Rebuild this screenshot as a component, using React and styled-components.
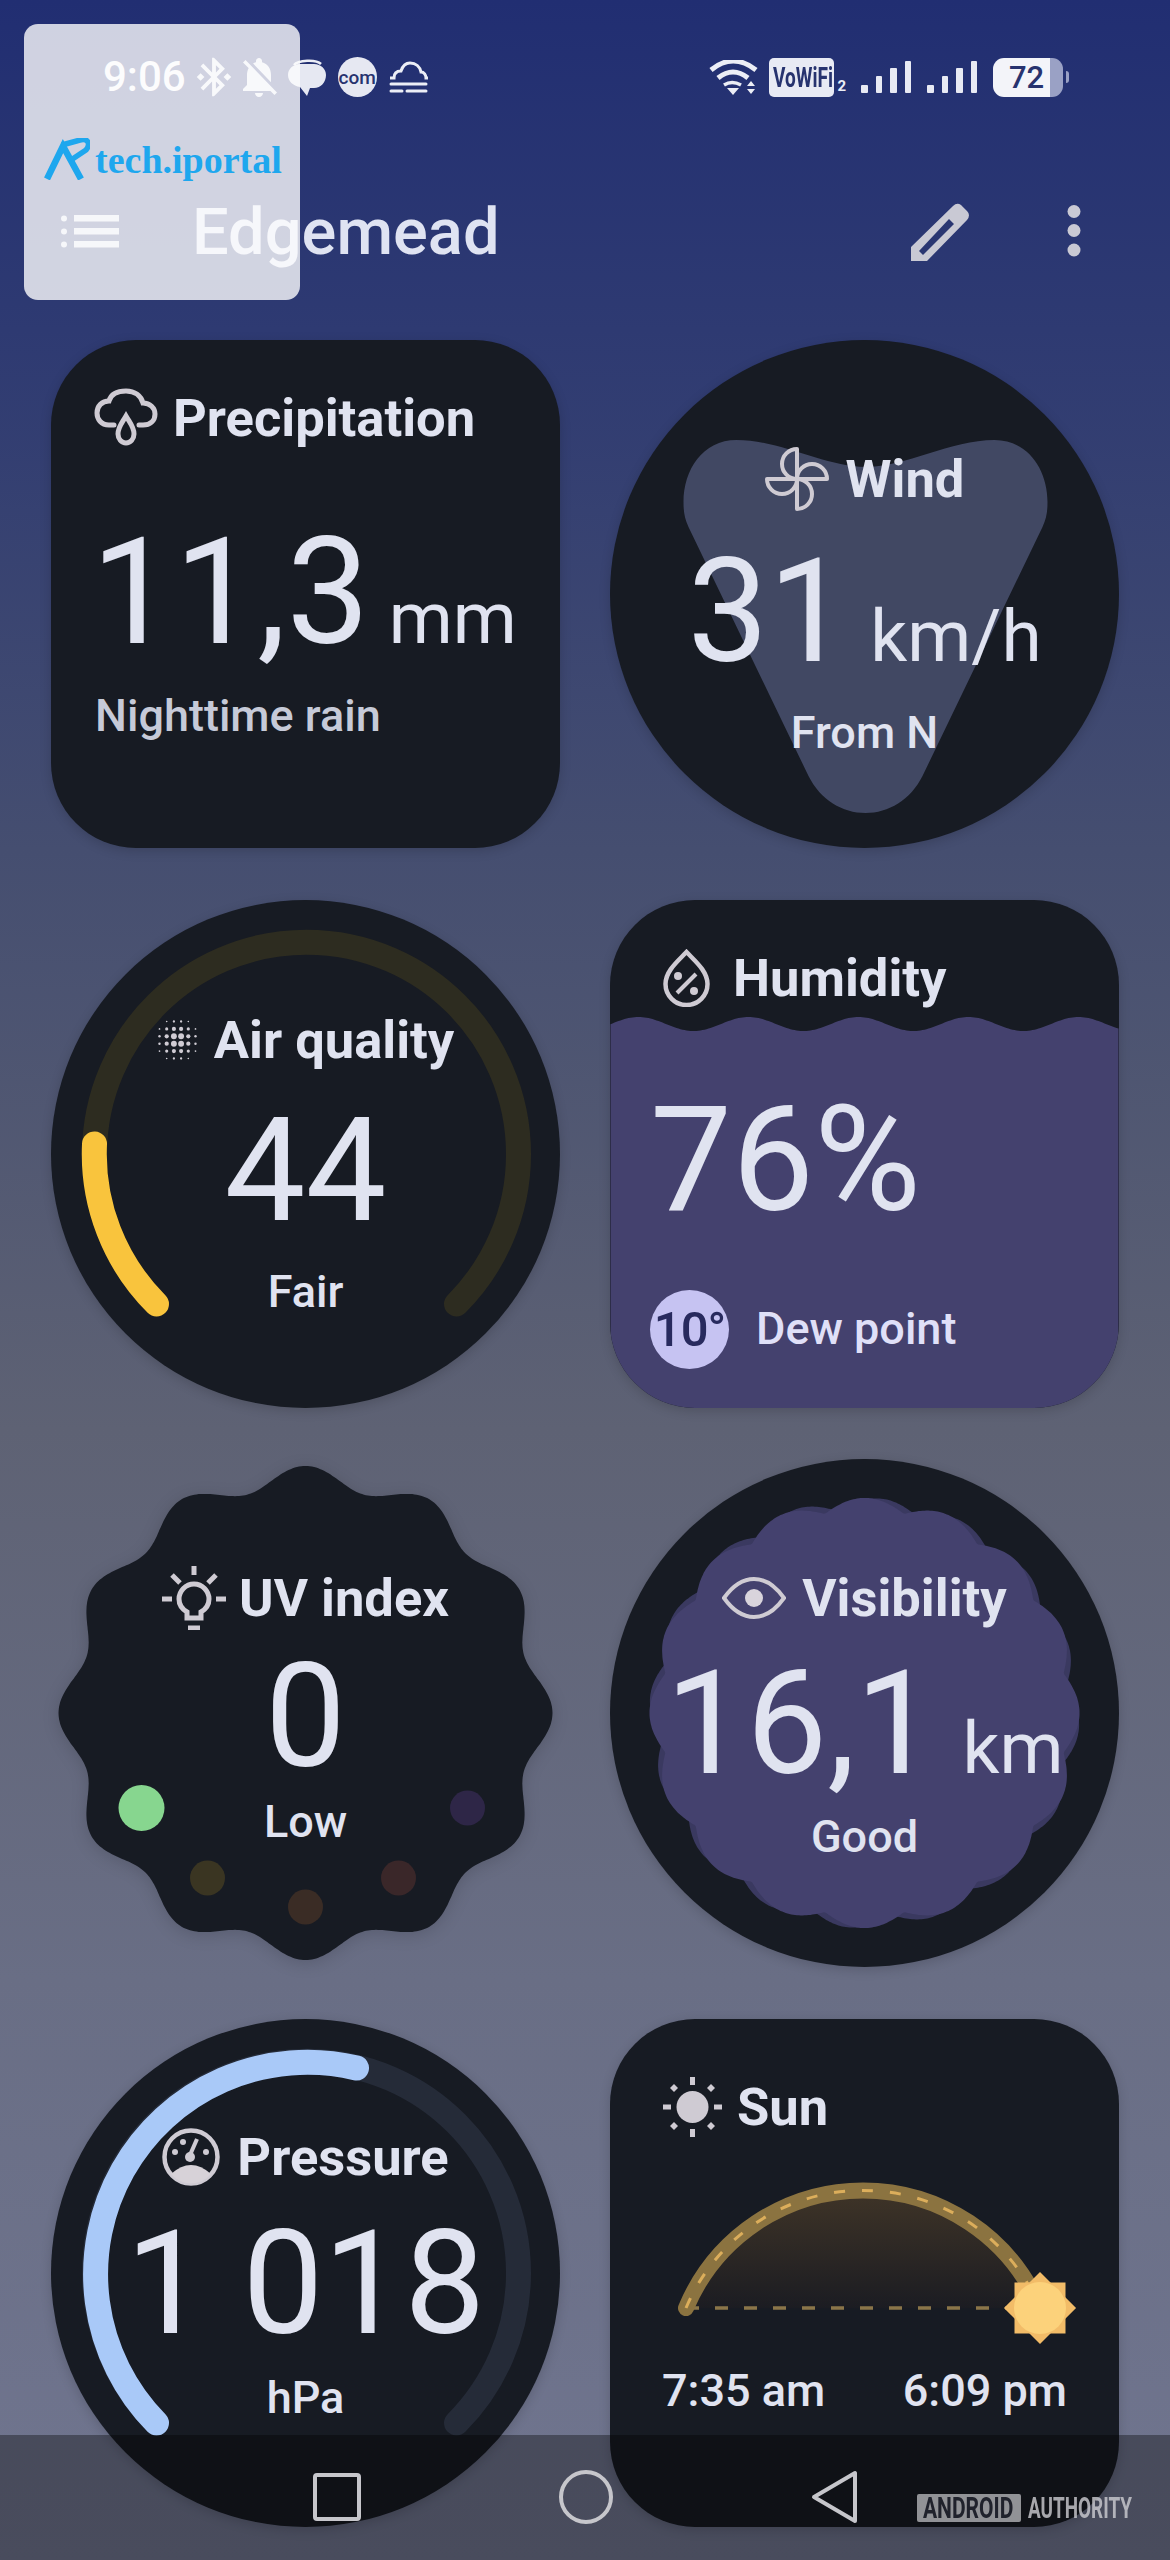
import React from "react";
import styled, { createGlobalStyle } from "styled-components";
import { MdBluetoothConnected, MdNotificationsOff } from "react-icons/md";

const INK = "#e0e3f0";
const ICON = "#cfcbd3";
const CARD = "#171b23";
const PURPLE = "#44416e";

// shapes that are worked out once, they are easier as functions than as hand written paths
const polar = (fn, steps = 720, cx = 254, cy = 254, turn = 0) => {
  let d = "";
  for (let i = 0; i < steps; i++) {
    const t = (i / steps) * Math.PI * 2;
    const r = fn(t);
    const a = t + turn;
    d += `${i ? "L" : "M"}${(cx + r * Math.sin(a)).toFixed(1)} ${(cy - r * Math.cos(a)).toFixed(1)} `;
  }
  return d + "Z";
};

const cookie = polar((t) => 236.5 + 10.5 * Math.cos(12 * t));
const scallop = polar((t) => 203 + 12 * Math.abs(Math.cos(8 * t)));
const scallopBack = polar((t) => 203 + 12 * Math.abs(Math.cos(8 * t)), 720, 254, 254, 0.07);

const wave = (() => {
  let d = "M0 508 L0 131 ";
  for (let x = 0; x <= 508; x += 2) {
    const y = 124 - 7 * Math.cos((2 * Math.PI * (x - 28)) / 110);
    d += `L${x} ${y.toFixed(1)} `;
  }
  return d + "L508 508 Z";
})();

const GlobalStyle = createGlobalStyle`
  html, body {
    margin: 0;
    padding: 0;
    background: #222f72;
  }
  * {
    box-sizing: border-box;
  }
`;

const Page = styled.div`
  position: relative;
  width: 1170px;
  height: 2560px;
  overflow: hidden;
  font-family: Roboto, "Liberation Sans", sans-serif;
  color: ${INK};
  background: linear-gradient(
    180deg,
    #212e72 0,
    #2e3a72 330px,
    #454e70 850px,
    #5e6274 1430px,
    #696e85 1980px,
    #70758f 2560px
  );
`;

const StatusBar = styled.div`
  display: flex;
  align-items: center;
  justify-content: space-between;
  height: 46px;
  margin-top: 54px;
  padding: 0 101px 0 103px;
  color: #eceef6;
`;

const StatusGroup = styled.div`
  display: flex;
  align-items: center;
  gap: ${(p) => p.$gap}px;
`;

const Clock = styled.span`
  font-size: 42px;
  font-weight: 500;
  line-height: 46px;
  color: #fff;
`;

const BluetoothGlyph = styled(MdBluetoothConnected)`
  flex: none;
  margin: 0 -7px;
`;

const BellGlyph = styled(MdNotificationsOff)`
  flex: none;
  margin: 0 -7px;
`;

const ComBadge = styled.span`
  display: flex;
  align-items: center;
  justify-content: center;
  width: 39px;
  height: 40px;
  border-radius: 50%;
  background: #e6e8f2;
  color: #27336f;
  font-size: 19px;
  font-weight: 500;
`;

const VoWifi = styled.span`
  display: block;
  width: 65px;
  height: 39px;
  border-radius: 5px;
  background: #e8eaf4;
  color: #27336f;
  font-size: 28px;
  font-weight: 700;
  line-height: 39px;
  padding-left: 4px;
  white-space: nowrap;
  span {
    display: inline-block;
    transform: scaleX(0.68);
    transform-origin: left center;
  }
`;

const SimSlot = styled.span`
  font-size: 15px;
  font-weight: 700;
  align-self: flex-end;
  margin: 0 4px 3px -8px;
  line-height: 15px;
`;

const Signal = styled.div`
  display: flex;
  align-items: flex-end;
  gap: 8px;
  height: 32px;
  margin-right: 5px;
`;

const SignalBar = styled.i`
  display: block;
  width: 6.5px;
  height: ${(p) => p.$h}px;
  background: #e8eaf4;
  border-radius: 1px;
`;

const Battery = styled.div`
  display: flex;
  align-items: center;
  gap: 3px;
`;

const BatteryBody = styled.div`
  width: 70px;
  height: 39px;
  border-radius: 11px;
  background: linear-gradient(90deg, #f3f4f9 81%, #9aa1c5 81%);
  color: #27336f;
  font-size: 31px;
  font-weight: 500;
  line-height: 39px;
  padding-left: 16px;
`;

const BatteryTip = styled.i`
  display: block;
  width: 3px;
  height: 12px;
  border-radius: 0 3px 3px 0;
  background: #9aa1c5;
`;

const Header = styled.header`
  display: flex;
  align-items: center;
  height: 100px;
  margin-top: 81px;
  padding: 0 89px 0 61px;
`;

const Title = styled.h1`
  margin: 2px 0 0 73px;
  font-size: 65px;
  font-weight: 500;
  line-height: 72px;
  color: #dfe3f2;
`;

const HeaderActions = styled.div`
  display: flex;
  align-items: center;
  gap: 98px;
  margin-left: auto;
`;

const Grid = styled.main`
  display: grid;
  grid-template-columns: 509px 509px;
  grid-auto-rows: 508px;
  column-gap: 50px;
  row-gap: 51.6px;
  margin-top: 59px;
  padding-left: 51px;
`;

const Card = styled.section`
  position: relative;
  isolation: isolate;
  display: flex;
  flex-direction: column;
  align-items: ${(p) => (p.$center ? "center" : "flex-start")};
  padding-top: ${(p) => p.$top}px;
  padding-left: ${(p) => p.$left || 0}px;
  border-radius: ${(p) => (p.$shape === "circle" ? "50%" : "85px")};
  background: ${(p) => (p.$shape === "cookie" ? "transparent" : CARD)};
  box-shadow: ${(p) => (p.$shape === "cookie" ? "none" : "0 3px 12px rgba(0, 0, 0, 0.16)")};
  overflow: ${(p) => (p.$shape === "cookie" ? "visible" : "hidden")};
`;

const Backdrop = styled.svg`
  position: absolute;
  inset: 0;
  width: 100%;
  height: 100%;
  z-index: -1;
  overflow: visible;
  filter: ${(p) => (p.$lifted ? "drop-shadow(0 3px 8px rgba(0, 0, 0, 0.15))" : "none")};
`;

const Heading = styled.h2`
  display: flex;
  align-items: center;
  gap: ${(p) => p.$gap}px;
  height: 60px;
  margin: 0 0 0 ${(p) => p.$indent || 0}px;
  font-size: 52.5px;
  font-weight: 700;
  line-height: 58px;
  white-space: nowrap;
  svg {
    flex: none;
  }
`;

const Reading = styled.div`
  display: flex;
  align-items: baseline;
  margin: ${(p) => p.$mt}px 0 0 ${(p) => p.$ml || 0}px;
  white-space: nowrap;
`;

const Value = styled.span`
  font-size: ${(p) => p.$size || 144}px;
  font-weight: 400;
  line-height: 150px;
`;

const Unit = styled.span`
  margin-left: ${(p) => p.$gap}px;
  font-size: 73px;
  font-weight: 400;
`;

const Caption = styled.p`
  margin: ${(p) => p.$mt}px 0 0 ${(p) => p.$ml || 0}px;
  font-size: 45px;
  font-weight: 500;
  line-height: 52px;
  color: ${(p) => p.$color || INK};
  white-space: nowrap;
`;

const DewRow = styled.div`
  display: flex;
  align-items: center;
  gap: 27px;
  margin-top: 54px;
`;

const DewBadge = styled.span`
  display: flex;
  align-items: center;
  justify-content: center;
  width: 79px;
  height: 79px;
  border-radius: 50%;
  background: #c6c3f2;
  color: #282a5e;
  font-size: 49px;
  font-weight: 500;
  letter-spacing: -1px;
`;

const SunChart = styled.svg`
  display: block;
  width: 508px;
  height: 228px;
`;

const TimeRow = styled.div`
  display: flex;
  justify-content: space-between;
  width: 100%;
  padding: 0 52px 0 52px;
  font-size: 45px;
  font-weight: 500;
  line-height: 52px;
`;

const NavBar = styled.nav`
  position: absolute;
  left: 0;
  right: 0;
  bottom: 0;
  display: flex;
  justify-content: center;
  align-items: center;
  gap: 198px;
  height: 125px;
  padding: 0 0 2px 0;
  background: rgba(0, 0, 0, 0.35);
`;

const NavSquare = styled.i`
  display: block;
  width: 48px;
  height: 48px;
  border: 4px solid #c6c6cb;
  border-radius: 4px;
`;

const NavCircle = styled.i`
  display: block;
  width: 54px;
  height: 54px;
  border: 4px solid #c6c6cb;
  border-radius: 50%;
`;

const Authority = styled.div`
  position: absolute;
  left: 917px;
  top: 59px;
  display: flex;
  align-items: center;
  gap: 7px;
  font-size: 30px;
  font-weight: 700;
  line-height: 28px;
  white-space: nowrap;
`;

const AuthorityBadge = styled.span`
  display: block;
  width: 104px;
  height: 28px;
  border-radius: 2px;
  background: rgba(190, 190, 194, 0.75);
  color: #20222c;
  padding-left: 6px;
  span {
    display: inline-block;
    transform: scaleX(0.7);
    transform-origin: left center;
  }
`;

const AuthorityWord = styled.span`
  display: block;
  width: 104px;
  color: rgba(205, 205, 210, 0.8);
  span {
    display: inline-block;
    transform: scaleX(0.63);
    transform-origin: left center;
  }
`;

const Watermark = styled.aside`
  position: absolute;
  left: 24px;
  top: 24px;
  width: 276px;
  height: 276px;
  display: flex;
  align-items: flex-start;
  gap: 5px;
  padding: 114px 0 0 20px;
  border-radius: 14px;
  background: rgba(251, 251, 252, 0.8);
`;

const LogoText = styled.span`
  font-family: "Liberation Serif", serif;
  font-size: 38px;
  font-weight: 700;
  line-height: 44px;
  color: #1ea7ee;
`;

const ChatIcon = () => (
  <svg width="38" height="37" viewBox="0 0 38 37">
    <path d="M6 6 C10 1 28 0 33 5" fill="none" stroke="#eceef6" strokeWidth="2.5" />
    <path d="M12 5 H26 C33 5 38 10 38 16 C38 23 33 29 26 29 H22 L19 37 L12 28 C5 27 0 22 0 16 C0 10 5 5 12 5Z" fill="#e6e8f2" />
  </svg>
);

const FogIcon = () => (
  <svg width="39" height="32" viewBox="0 0 39 32" fill="none" stroke="#eceef6" strokeWidth="3">
    <path d="M1 17 H5 C5 12 8 10 12 10 C14 4 18 2 21 2 C27 2 31 6 32 11 C35 11 37 14 37 17 H39" />
    <path d="M2 23 H37 M2 30 H13 M18 30 H37" strokeLinecap="round" />
  </svg>
);

const WifiIcon = () => (
  <svg width="49" height="35" viewBox="0 0 49 35" fill="none" stroke="#eceef6" strokeWidth="5">
    <path d="M2 10 Q24 -8 47 10" />
    <path d="M9 18 Q24 6 39 18" />
    <path d="M15 25 Q23 20 32 25" strokeWidth="3.5" />
    <path d="M18 28 H30 L24 35Z" fill="#eceef6" stroke="none" />
    <path d="M38 26 L42 21 L46 26Z M38 29 L42 34 L46 29Z" fill="#eceef6" stroke="none" />
  </svg>
);

const MenuIcon = () => (
  <svg width="58" height="33" viewBox="0 0 58 33" fill="#e0e3ef">
    <circle cx="3" cy="3.5" r="3" />
    <circle cx="3" cy="16.5" r="3" />
    <circle cx="3" cy="29.5" r="3" />
    <rect x="13" y="0" width="45" height="6.5" />
    <rect x="13" y="13" width="45" height="6.5" />
    <rect x="13" y="26" width="45" height="6.5" />
  </svg>
);

const PencilIcon = () => (
  <svg width="58" height="59" viewBox="0 0 58 59" fill="#c9c9d4">
    <path
      fillRule="evenodd"
      d="M0 59 V45 L42 4 Q46 0 50 3 L56 9 Q60 13 56 18 L16 59 Z M8 49 L12 53 L43 22 L38 17 Z"
    />
  </svg>
);

const MoreIcon = () => (
  <svg width="14" height="52" viewBox="0 0 14 52" fill="#c9c9d4">
    <circle cx="7" cy="6.5" r="6.5" />
    <circle cx="7" cy="25.5" r="6.5" />
    <circle cx="7" cy="45" r="6.5" />
  </svg>
);

const LogoMark = () => (
  <svg width="46" height="42" viewBox="0 0 46 42" fill="none" stroke="#1ea7ee" strokeWidth="6.5">
    <path d="M3 41 L19 8 L37 41" />
    <path d="M18 7 L36 2 C44 0 47 6 42 12 L27 22" strokeWidth="5.5" />
  </svg>
);

const RainIcon = () => (
  <svg width="64" height="60" viewBox="0 0 64 60" fill="none" stroke={ICON} strokeWidth="5" strokeLinecap="round">
    <path d="M20 37 H15 C7 37 3 31 3 25 C3 18 8 13 15 13 C17 6 24 3 32 3 C41 3 47 8 49 15 C56 15 61 20 61 26 C61 33 56 37 49 37 H45" />
    <path d="M32 28 C28 35 24 39 24 46 A8 9 0 0 0 40 46 C40 39 36 35 32 28Z" />
  </svg>
);

const WindIcon = () => (
  <svg width="64" height="64" viewBox="0 0 64 64" fill="none" stroke={ICON} strokeWidth="4" strokeLinejoin="round">
    <path d="M32 32 V2 A15 15 0 0 0 32 32Z" />
    <path d="M32 32 H62 A15 15 0 0 0 32 32Z" />
    <path d="M32 32 V62 A15 15 0 0 0 32 32Z" />
    <path d="M32 32 H2 A15 15 0 0 0 32 32Z" />
  </svg>
);

const AirIcon = () => {
  const dots = [];
  for (let row = 0; row < 6; row++) {
    for (let col = 0; col < 6; col++) {
      const x = 2.5 + col * 7.2;
      const y = 2.5 + row * 7.4;
      const dist = Math.hypot(x - 20.5, y - 21);
      if (dist < 22) dots.push(<circle key={`${row}-${col}`} cx={x} cy={y} r={Math.max(0.8, 3.6 - dist * 0.13)} />);
    }
  }
  return (
    <svg width="41" height="42" viewBox="0 0 41 42" fill={ICON}>
      {dots}
    </svg>
  );
};

const DropIcon = () => (
  <svg width="47" height="58" viewBox="0 0 47 58">
    <path d="M23.5 3 C15 12 2.5 22 2.5 35 A21 21 0 0 0 44.5 35 C44.5 22 32 12 23.5 3Z" fill="none" stroke={ICON} strokeWidth="4.5" />
    <path d="M14 44 L33 25" stroke={ICON} strokeWidth="4" />
    <circle cx="15" cy="27" r="4" fill={ICON} />
    <circle cx="31" cy="42" r="4" fill={ICON} />
  </svg>
);

const BulbIcon = () => (
  <svg width="64" height="64" viewBox="0 0 64 64" fill="none" stroke={ICON} strokeWidth="5">
    <path d="M32 0 V9 M10 9 L18 17 M54 9 L46 17 M0 33 H10 M54 33 H64 M26 62 H38" />
    <path d="M25 52 V46 C20 43 17 39 17 33 A15 15 0 0 1 47 33 C47 39 44 43 39 46 V52 Z" />
  </svg>
);

const EyeIcon = () => (
  <svg width="64" height="44" viewBox="0 0 64 44">
    <path d="M2 22 C12 8 22 3 32 3 C42 3 52 8 62 22 C52 36 42 41 32 41 C22 41 12 36 2 22Z" fill="none" stroke={ICON} strokeWidth="4" />
    <circle cx="32" cy="22" r="9" fill="#d9d4dc" />
  </svg>
);

const GaugeIcon = () => (
  <svg width="58" height="58" viewBox="0 0 58 58">
    <circle cx="29" cy="29" r="26.5" fill="none" stroke={ICON} strokeWidth="4.5" />
    <path d="M9 46 Q29 28 49 46 A26 26 0 0 1 9 46Z" fill="#d7d2d8" />
    <path d="M28 27 L35 11" stroke={ICON} strokeWidth="4" />
    <circle cx="28" cy="29" r="5" fill={ICON} />
    <circle cx="13" cy="24" r="3" fill={ICON} />
    <circle cx="21" cy="14" r="3" fill={ICON} />
    <circle cx="44" cy="24" r="3" fill={ICON} />
  </svg>
);

const SunIcon = () => (
  <svg width="59" height="60" viewBox="0 0 59 60" fill={ICON}>
    <circle cx="29.5" cy="30" r="16" />
    <rect x="27" y="0" width="5" height="8" />
    <rect x="27" y="52" width="5" height="8" />
    <rect x="0" y="27.5" width="8" height="5" />
    <rect x="51" y="27.5" width="8" height="5" />
    <path d="M11 7 L15 11 L11 15 L7 11Z M48 7 L52 11 L48 15 L44 11Z M11 45 L15 49 L11 53 L7 49Z M48 45 L52 49 L48 53 L44 49Z" />
  </svg>
);

const Ring = ({ track, fill, end, large = 0 }) => (
  <Backdrop viewBox="0 0 508 508" fill="none" strokeWidth="25" strokeLinecap="round">
    <path d="M105 404 A212 212 0 1 1 405 404" stroke={track} />
    <path d={`M105 404 A212 212 0 ${large} 1 ${end}`} stroke={fill} />
  </Backdrop>
);

export default function App() {
  return (
    <Page>
      <GlobalStyle />

      <StatusBar>
        <StatusGroup $gap={12}>
          <Clock>9:06</Clock>
          <BluetoothGlyph size={46} />
          <BellGlyph size={48} />
          <ChatIcon />
          <ComBadge>com</ComBadge>
          <FogIcon />
        </StatusGroup>
        <StatusGroup $gap={11}>
          <WifiIcon />
          <VoWifi>
            <span>VoWiFi</span>
          </VoWifi>
          <SimSlot>2</SimSlot>
          <Signal>
            <SignalBar $h={8} />
            <SignalBar $h={17} />
            <SignalBar $h={25} />
            <SignalBar $h={32} />
          </Signal>
          <Signal>
            <SignalBar $h={8} />
            <SignalBar $h={17} />
            <SignalBar $h={25} />
            <SignalBar $h={32} />
          </Signal>
          <Battery>
            <BatteryBody>72</BatteryBody>
            <BatteryTip />
          </Battery>
        </StatusGroup>
      </StatusBar>

      <Header>
        <MenuIcon />
        <Title>Edgemead</Title>
        <HeaderActions>
          <PencilIcon />
          <MoreIcon />
        </HeaderActions>
      </Header>

      <Grid>
        <Card $top={48} $left={43}>
          <Heading $gap={15}>
            <RainIcon />
            Precipitation
          </Heading>
          <Reading $mt={70} $ml={-3}>
            <Value $size={148}>11,3</Value>
            <Unit $gap={19}>mm</Unit>
          </Reading>
          <Caption $mt={22} $ml={1} $color="#c6cad8">Nighttime rain</Caption>
        </Card>

        <Card $shape="circle" $center $top={109}>
          <Backdrop viewBox="0 0 508 508">
            <path
              d="M255 127 C215 127 170 100 126 100 C92 100 73 130 73 162 C73 172 74 178 78 187 L198 436 C210 460 232 473 255 473 C278 473 300 460 312 436 L432 187 C436 178 437 172 437 162 C437 130 418 100 384 100 C340 100 295 127 255 127Z"
              fill="#414863"
            />
          </Backdrop>
          <Heading $gap={17}>
            <WindIcon />
            Wind
          </Heading>
          <Reading $mt={28}>
            <Value>31</Value>
            <Unit $gap={21}>km/h</Unit>
          </Reading>
          <Caption $mt={20}>From N</Caption>
        </Card>

        <Card $shape="circle" $center $top={110}>
          <Ring track="#2d2c20" fill="#f9c43d" end="43 244" />
          <Heading $gap={16}>
            <AirIcon />
            Air quality
          </Heading>
          <Reading $mt={26}>
            <Value>44</Value>
          </Reading>
          <Caption $mt={20}>Fair</Caption>
        </Card>

        <Card $top={48} $left={40}>
          <Backdrop viewBox="0 0 508 508">
            <path d={wave} fill={PURPLE} />
          </Backdrop>
          <Heading $gap={23} $indent={13}>
            <DropIcon />
            Humidity
          </Heading>
          <Reading $mt={78}>
            <Value $size={146}>76%</Value>
          </Reading>
          <DewRow>
            <DewBadge>10°</DewBadge>
            <Caption $mt={0} $color="#e0e0f8">Dew point</Caption>
          </DewRow>
        </Card>

        <Card $shape="cookie" $center $top={109}>
          <Backdrop viewBox="0 0 508 508" $lifted>
            <path d={cookie} fill={CARD} />
            <circle cx="90" cy="349" r="23" fill="#87d68f" />
            <circle cx="156" cy="419" r="17.5" fill="#3a3522" />
            <circle cx="254" cy="448" r="17.5" fill="#3a2c25" />
            <circle cx="347" cy="419" r="17.5" fill="#3a2729" />
            <circle cx="416" cy="349" r="17.5" fill="#2e2647" />
          </Backdrop>
          <Heading $gap={13}>
            <BulbIcon />
            UV index
          </Heading>
          <Reading $mt={14}>
            <Value>0</Value>
          </Reading>
          <Caption $mt={4}>Low</Caption>
        </Card>

        <Card $shape="circle" $center $top={109}>
          <Backdrop viewBox="0 0 508 508">
            <path d={scallopBack} fill="#3a3960" />
            <path d={scallop} fill={PURPLE} />
          </Backdrop>
          <Heading $gap={16}>
            <EyeIcon />
            Visibility
          </Heading>
          <Reading $mt={21}>
            <Value>16,1</Value>
            <Unit $gap={26}>km</Unit>
          </Reading>
          <Caption $mt={12}>Good</Caption>
        </Card>

        <Card $shape="circle" $center $top={108}>
          <Ring track="#252b38" fill="#a9c9f8" end="305 49" />
          <Heading $gap={17}>
            <GaugeIcon />
            Pressure
          </Heading>
          <Reading $mt={22}>
            <Value>1 018</Value>
          </Reading>
          <Caption $mt={13}>hPa</Caption>
        </Card>

        <Card $top={58}>
          <Heading $gap={15} $indent={53}>
            <SunIcon />
            Sun
          </Heading>
          <SunChart viewBox="0 118 508 228">
            <defs>
              <linearGradient id="sunGlow" x1="0" y1="0" x2="0" y2="1">
                <stop offset="0" stopColor="#3f3427" />
                <stop offset="1" stopColor="#1b1c22" />
              </linearGradient>
            </defs>
            <path d="M76 289 A192 192 0 0 1 430 289Z" fill="url(#sunGlow)" />
            <path d="M76 289 H404" stroke="#8a7549" strokeWidth="3.5" strokeDasharray="13 16" />
            <path d="M76 289 A192 192 0 0 1 430 289" fill="none" stroke="#8b7340" strokeWidth="16" strokeLinecap="round" />
            <path d="M76 289 A192 192 0 0 1 430 289" fill="none" stroke="#dcae5b" strokeWidth="3" strokeDasharray="11 17" />
            <rect x="404.5" y="263.5" width="51" height="51" fill="#f2bc68" />
            <rect x="404.5" y="263.5" width="51" height="51" fill="#f2bc68" transform="rotate(45 430 289)" />
            <circle cx="430" cy="289" r="26" fill="#fcd27b" />
          </SunChart>
          <TimeRow>
            <span>7:35 am</span>
            <span>6:09 pm</span>
          </TimeRow>
        </Card>
      </Grid>

      <NavBar>
        <NavSquare />
        <NavCircle />
        <svg width="46" height="54" viewBox="0 0 46 54" fill="none" stroke="#c6c6cb" strokeWidth="4" strokeLinejoin="round">
          <path d="M3 27 L44 3 V51Z" />
        </svg>
        <Authority>
          <AuthorityBadge>
            <span>ANDROID</span>
          </AuthorityBadge>
          <AuthorityWord>
            <span>AUTHORITY</span>
          </AuthorityWord>
        </Authority>
      </NavBar>

      <Watermark>
        <LogoMark />
        <LogoText>tech.iportal</LogoText>
      </Watermark>
    </Page>
  );
}
